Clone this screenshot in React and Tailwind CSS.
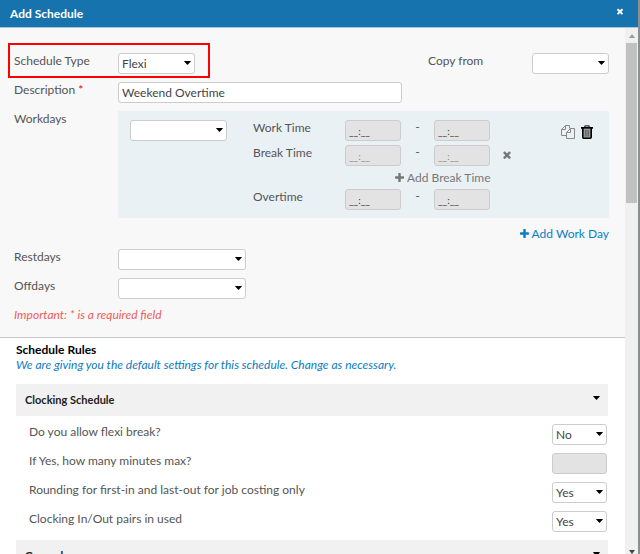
import React, { useState } from 'react';

const CloseIcon = ({ className }) => (
  <svg viewBox="302 302 1188 1252" className={className} fill="currentColor" aria-hidden="true">
    <path d="M1490 1322q0 40-28 68l-136 136q-28 28-68 28t-68-28l-294-294-294 294q-28 28-68 28t-68-28l-136-136q-28-28-28-68t28-68l294-294-294-294q-28-28-28-68t28-68l136-136q28-28 68-28t68 28l294 294 294-294q28-28 68-28t68 28l136 136q28 28 28 68t-28 68l-294 294 294 294q28 28 28 68z" />
  </svg>
);

const PlusIcon = ({ className }) => (
  <svg viewBox="192 128 1408 1408" className={className} fill="currentColor" aria-hidden="true">
    <path d="M1600 736v192q0 40-28 68t-68 28h-416v416q0 40-28 68t-68 28h-192q-40 0-68-28t-28-68v-416h-416q-40 0-68-28t-28-68v-192q0-40 28-68t68-28h416v-416q0-40 28-68t68-28h192q40 0 68 28t28 68v416h416q40 0 68 28t28 68z" />
  </svg>
);

const CopyIcon = () => (
  <svg viewBox="0 0 14 14" className="w-3.5 h-3.5" fill="none" stroke="currentColor" strokeLinejoin="round" aria-hidden="true">
    <path d="M5.5 10.5h-5v-6l4-4h4v3" />
    <path d="M4.5 .5v4h-4" />
    <path d="M9.5 3.5h4v10h-8v-6z" />
    <path d="M9.5 3.5v4h-4" />
  </svg>
);

const TrashIcon = () => (
  <svg viewBox="0 0 12 14" className="w-3 h-3.5" aria-hidden="true">
    <path d="M3.5 2.5l.6-1.6h3.8l.6 1.6" fill="none" stroke="#333" strokeWidth="1.2" />
    <path d="M2 4h8v9H2z" fill="#999" />
    <path d="M0 2.9h12M1.8 3v9.2q0 1 1 1h6.4q1 0 1-1V3" fill="none" stroke="#000" strokeWidth="1.6" />
    <path d="M4.5 5v6.5M6 5v6.5M7.5 5v6.5" stroke="#444" strokeWidth=".6" />
  </svg>
);

const Caret = ({ className = '' }) => (
  <svg viewBox="0 0 7 4" className={`w-[7px] h-1 ${className}`} aria-hidden="true">
    <path d="M.5 0h6q.5 0 .3.6L4 3.6q-.5.5-1 0L.2.6Q0 0 .5 0z" fill="#000" />
  </svg>
);

const Select = ({ id, options = [''], label, className }) => (
  <div className={`relative ${className}`}>
    <select
      id={id}
      aria-label={label}
      className="block w-full h-[21px] appearance-none rounded-[3px] border border-[#ccc] bg-white pl-[3px] pr-4 text-xs text-[#444]"
    >
      {options.map((o) => (
        <option key={o}>{o}</option>
      ))}
    </select>
    <Caret className="absolute right-1 top-2 pointer-events-none" />
  </div>
);

const FieldRow = ({ id, label, required, children }) => (
  <div className="flex items-start">
    <label htmlFor={id} className="w-[104px] shrink-0 leading-4">
      {label}
      {required && <span className="text-[#f00000]"> *</span>}
    </label>
    {children}
  </div>
);

const TimeRange = ({ label, faded, children }) => (
  <div className="flex items-start h-[21px]">
    <span className="w-[92px] leading-4">{label}</span>
    <input
      aria-label={`${label} start`}
      disabled
      defaultValue="__:__"
      className={`w-14 h-[21px] rounded-[3px] border border-[#ccc] bg-[#e3e3e3] px-[3px] text-[10px] ${faded ? 'text-[#888]' : 'text-[#333]'}`}
    />
    <span className="w-[33px] text-center leading-[14px]">-</span>
    <input
      aria-label={`${label} end`}
      disabled
      defaultValue="__:__"
      className={`w-14 h-[21px] rounded-[3px] border border-[#ccc] bg-[#e3e3e3] px-[3px] text-[10px] ${faded ? 'text-[#888]' : 'text-[#333]'}`}
    />
    {children}
  </div>
);

const SectionHeader = ({ title, open, onClick }) => (
  <button
    type="button"
    aria-expanded={open}
    onClick={onClick}
    className="flex w-full h-8 shrink-0 items-center justify-between bg-[#f1f1f1] pl-[9px] pr-2 font-bold text-[11px] text-[#222]"
  >
    {title}
    <Caret className="mb-1" />
  </button>
);

const RuleRow = ({ id, label, options }) => (
  <div className="flex items-start justify-between">
    <label htmlFor={id} className="leading-4">{label}</label>
    {options ? (
      <Select id={id} options={options} className="w-[55px]" />
    ) : (
      <input id={id} disabled className="w-[55px] h-[21px] rounded-[3px] border border-[#ccc] bg-[#e3e3e3]" />
    )}
  </div>
);

const Scrollbar = () => (
  <div className="flex w-[13px] shrink-0 flex-col items-center bg-[#f0f0f0]" aria-hidden="true">
    <div className="flex h-[15px] items-center">
      <svg viewBox="0 0 6 4" className="w-1.5 h-1"><path d="M0 4l3-4 3 4z" fill="#999" /></svg>
    </div>
    <div className="h-40 w-[11px] bg-[#c1c1c1]" />
    <svg viewBox="0 0 6 4" className="mt-auto w-1.5 h-1"><path d="M0 0l3 4 3-4z" fill="#444" /></svg>
  </div>
);

const App = () => {
  const [description, setDescription] = useState('Weekend Overtime');
  const [clockingOpen, setClockingOpen] = useState(true);
  const [generalOpen, setGeneralOpen] = useState(false);

  return (
    <div className="flex h-screen flex-col overflow-hidden border-r-2 border-[#8a8f92] bg-white font-['Lato',sans-serif] text-xs text-[#555]">
      <header className="flex h-7 shrink-0 items-center justify-between border-b border-[#a9c4d6] bg-[#1673ad] pl-2.5 pr-[15px] text-white">
        <h1 className="text-xs font-bold">Add Schedule</h1>
        <button type="button" aria-label="Close" className="mb-1">
          <CloseIcon className="w-1.5 h-[7px]" />
        </button>
      </header>

      <div className="flex min-h-0 flex-1">
        <main className="flex min-w-0 flex-1 flex-col overflow-hidden">
          <section className="flex shrink-0 flex-col gap-2 border-b border-[#c8c8c8] bg-[#f8f8f8] pl-3.5 pr-4 pt-[25px] pb-[14px]">
            <div className="flex items-start justify-between">
              <div className="relative">
                <FieldRow id="type" label="Schedule Type">
                  <Select id="type" options={['Flexi', 'Fixed']} className="w-[77px]" />
                </FieldRow>
                {/* highlight around the schedule type */}
                <div className="pointer-events-none absolute -left-1.5 -right-[15px] -top-2.5 -bottom-1 border-2 border-[#f00]" />
              </div>
              <FieldRow id="copy" label="Copy from">
                <Select id="copy" className="w-[77px]" />
              </FieldRow>
            </div>

            <FieldRow id="description" label="Description" required>
              <input
                id="description"
                type="text"
                value={description}
                onChange={(e) => setDescription(e.target.value)}
                className="h-[21px] w-[284px] rounded-[3px] border border-[#ccc] bg-white px-[3px] text-xs text-[#444]"
              />
            </FieldRow>

            <FieldRow id="workday" label="Workdays">
              <div className="flex min-w-0 flex-1 items-start bg-[#eaf1f5] pb-2 pl-3 pr-4 pt-[9px]">
                <Select id="workday" className="w-[97px] mr-[26px]" />
                <div className="flex flex-col">
                  <TimeRange label="Work Time" />
                  <div className="h-1" />
                  <TimeRange label="Break Time" faded>
                    <button type="button" aria-label="Remove break time" className="ml-[13px] mt-1.5 text-[#777]">
                      <CloseIcon className="block w-2 h-2" />
                    </button>
                  </TimeRange>
                  <button type="button" className="ml-[142px] flex h-[23px] items-center gap-[3px] self-start text-[#777]">
                    <PlusIcon className="w-[9px] h-[9px]" />
                    Add Break Time
                  </button>
                  <TimeRange label="Overtime" />
                </div>
                <div className="ml-auto mt-[5px] flex gap-1.5">
                  <button type="button" aria-label="Copy work day" className="text-[#888]"><CopyIcon /></button>
                  <button type="button" aria-label="Delete work day"><TrashIcon /></button>
                </div>
              </div>
            </FieldRow>

            <button type="button" className="flex h-[15px] items-center gap-[3px] self-end text-[#087fc2]">
              <PlusIcon className="w-[9px] h-[9px]" />
              Add Work Day
            </button>

            <FieldRow id="rest" label="Restdays">
              <Select id="rest" className="w-32" />
            </FieldRow>
            <FieldRow id="off" label="Offdays">
              <Select id="off" className="w-32" />
            </FieldRow>
            <p className="italic leading-4 text-[#f05a5a]">Important: * is a required field</p>
          </section>

          <section className="flex flex-col pl-4 pr-[17px] pt-[5px]">
            <h2 className="font-bold leading-[14px] text-black">Schedule Rules</h2>
            <p className="mb-[11px] italic leading-4 text-[#0b7cbf]">
              We are giving you the default settings for this schedule. Change as necessary.
            </p>
            <SectionHeader title="Clocking Schedule" open={clockingOpen} onClick={() => setClockingOpen(!clockingOpen)} />
            {clockingOpen && (
              <div className="flex flex-col gap-2 py-2 pl-[13px] pr-px">
                <RuleRow id="flexi" label="Do you allow flexi break?" options={['No', 'Yes']} />
                <RuleRow id="minutes" label="If Yes, how many minutes max?" />
                <RuleRow id="rounding" label="Rounding for first-in and last-out for job costing only" options={['Yes', 'No']} />
                <RuleRow id="pairs" label="Clocking In/Out pairs in used" options={['Yes', 'No']} />
              </div>
            )}
            <SectionHeader title="General" open={generalOpen} onClick={() => setGeneralOpen(!generalOpen)} />
          </section>
        </main>
        <Scrollbar />
      </div>
    </div>
  );
};

export default App;
